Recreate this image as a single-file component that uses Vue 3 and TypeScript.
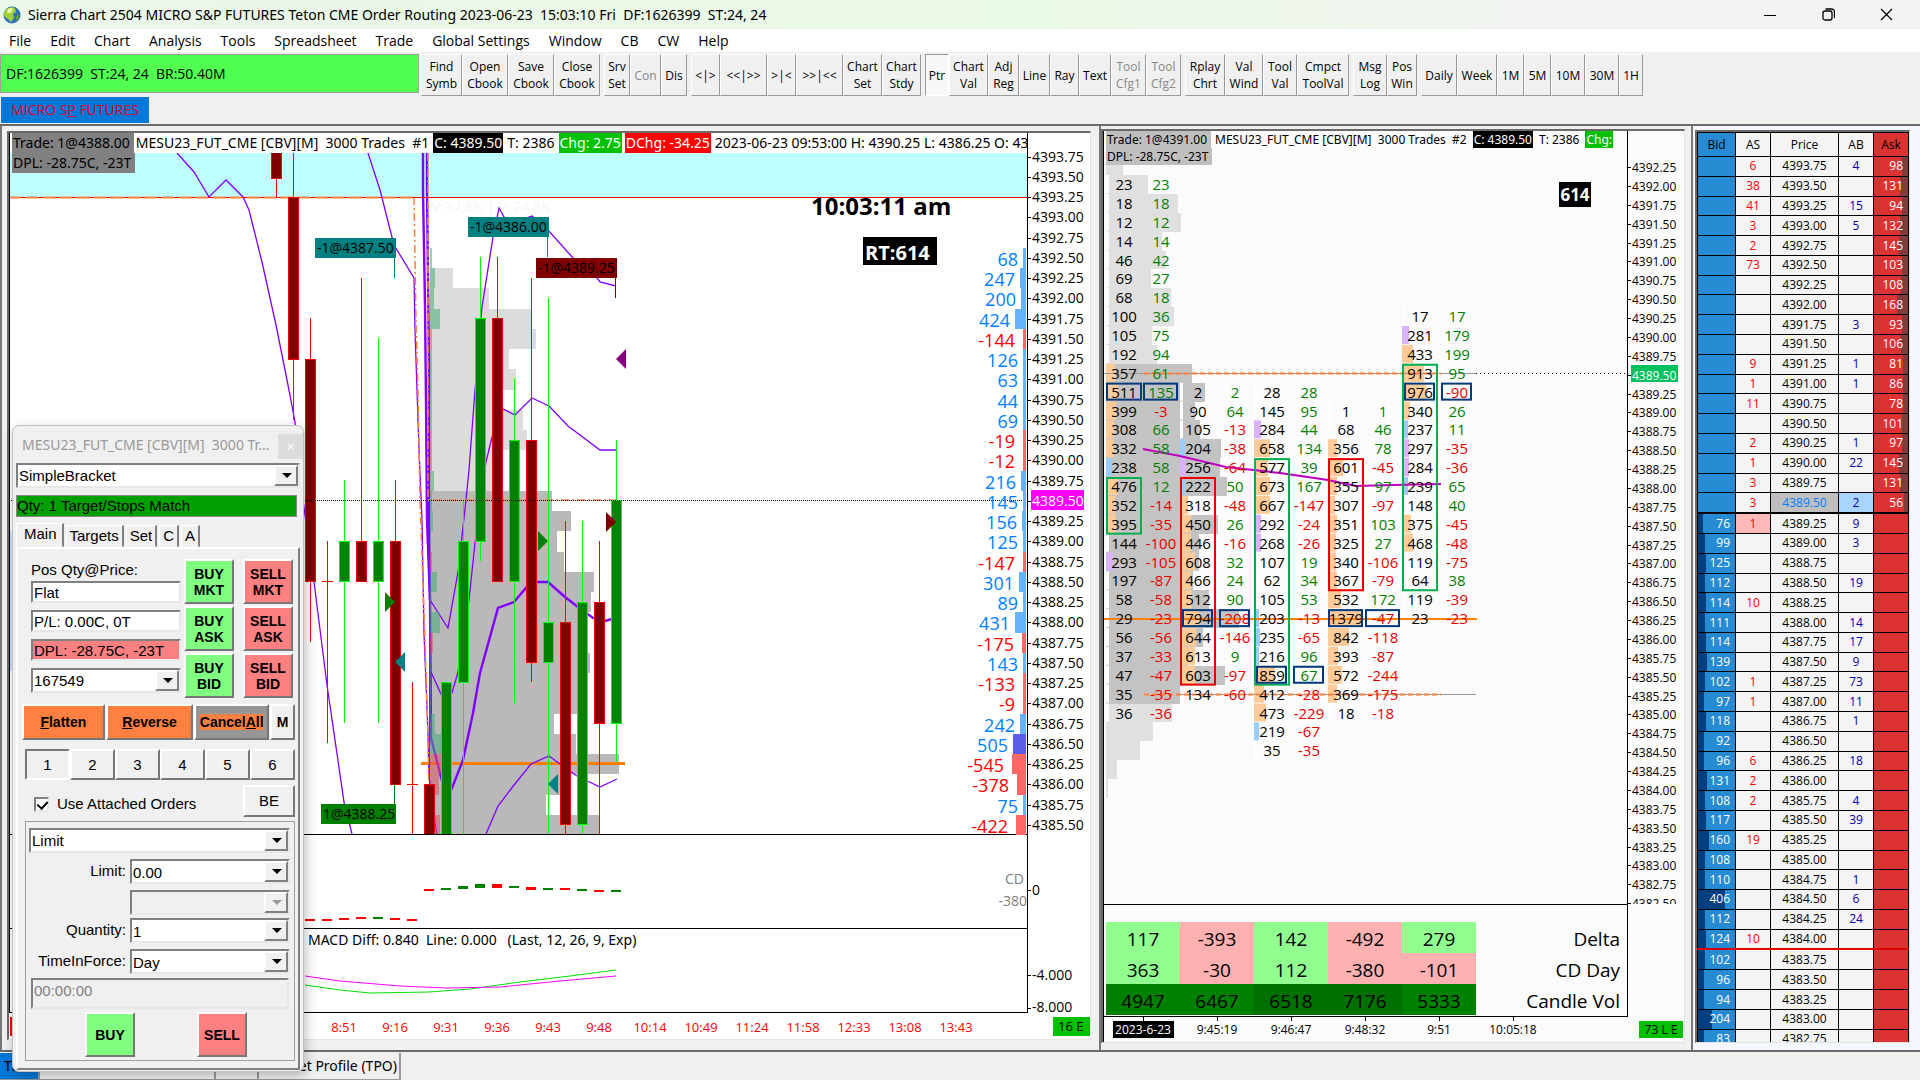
<script setup lang="ts">
interface ToolButton { text: string; w: number; off?: boolean; down?: boolean }
interface Candle { i: number; up: boolean; hi: number; top: number; bot: number; lo: number }
interface Rect { x: number; y: number; w: number; h: number; fill: string }

const menus = ['File', 'Edit', 'Chart', 'Analysis', 'Tools', 'Spreadsheet', 'Trade', 'Global Settings', 'Window', 'CB', 'CW', 'Help']

const toolGroups: ToolButton[][] = [
  [{ text: 'Find\nSymb', w: 41 }, { text: 'Open\nCbook', w: 46 }, { text: 'Save\nCbook', w: 46 }, { text: 'Close\nCbook', w: 46 }],
  [{ text: 'Srv\nSet', w: 26 }, { text: 'Con', w: 31, off: true }, { text: 'Dis', w: 26 }],
  [{ text: '<|>', w: 29 }, { text: '<<|>>', w: 47 }, { text: '>|<', w: 29 }, { text: '>>|<<', w: 47 }, { text: 'Chart\nSet', w: 39 }, { text: 'Chart\nStdy', w: 39 }],
  [{ text: 'Ptr', w: 24, down: true }, { text: 'Chart\nVal', w: 39 }, { text: 'Adj\nReg', w: 31 }, { text: 'Line', w: 31 }, { text: 'Ray', w: 29 }, { text: 'Text', w: 32 }, { text: 'Tool\nCfg1', w: 35, off: true }, { text: 'Tool\nCfg2', w: 35, off: true }],
  [{ text: 'Rplay\nChrt', w: 40 }, { text: 'Val\nWind', w: 38 }, { text: 'Tool\nVal', w: 34 }, { text: 'Cmpct\nToolVal', w: 52 }],
  [{ text: 'Msg\nLog', w: 34 }, { text: 'Pos\nWin', w: 30 }],
  [{ text: 'Daily', w: 36 }, { text: 'Week', w: 40 }, { text: '1M', w: 27 }, { text: '5M', w: 27 }, { text: '10M', w: 34 }, { text: '30M', w: 34 }, { text: '1H', w: 24 }],
]

/* ---- Chart 1: candles with bands and volume profile ---- */
const STEP = 20.25
const yAt = (price: number) => 156.5 + (4393.75 - price) * 4 * STEP
const axis1 = Array.from({ length: 34 }, (_, n) => 4393.75 - n * 0.25)

const candles: Candle[] = [
  { i: -2, up: false, hi: 133, top: 133, bot: 178, lo: 197 },
  { i: -1, up: false, hi: 133, top: 197, bot: 359, lo: 420 },
  { i: 0, up: false, hi: 318, top: 359, bot: 581, lo: 642 },
  { i: 1, up: false, hi: 541, top: 581, bot: 581, lo: 743 },
  { i: 2, up: true, hi: 480, top: 541, bot: 581, lo: 723 },
  { i: 3, up: false, hi: 278, top: 541, bot: 581, lo: 581 },
  { i: 4, up: true, hi: 338, top: 541, bot: 581, lo: 723 },
  { i: 5, up: false, hi: 480, top: 541, bot: 784, lo: 784 },
  { i: 6, up: false, hi: 682, top: 784, bot: 784, lo: 834 },
  { i: 7, up: false, hi: 560, top: 784, bot: 840, lo: 840 },
  { i: 8, up: true, hi: 682, top: 682, bot: 840, lo: 840 },
  { i: 9, up: true, hi: 501, top: 541, bot: 682, lo: 834 },
  { i: 10, up: true, hi: 257, top: 318, bot: 541, lo: 561 },
  { i: 11, up: false, hi: 257, top: 318, bot: 581, lo: 581 },
  { i: 12, up: true, hi: 379, top: 440, bot: 581, lo: 703 },
  { i: 13, up: false, hi: 278, top: 440, bot: 662, lo: 682 },
  { i: 14, up: true, hi: 298, top: 622, bot: 662, lo: 834 },
  { i: 15, up: false, hi: 521, top: 622, bot: 824, lo: 834 },
  { i: 16, up: true, hi: 521, top: 602, bot: 824, lo: 834 },
  { i: 17, up: false, hi: 541, top: 602, bot: 723, lo: 834 },
  { i: 18, up: true, hi: 440, top: 500, bot: 723, lo: 762 },
]
const cx = (i: number) => 310.5 + 17 * i

/* right edge of each profile row, starting at 4392.25 */
const profileEdges = [453, 489, 532, 536, 509, 516, 503, 523, 527, 503, 503, 552, 571, 557, 564, 594, 591, 585, 585, 590, 585, 585, 554, 576, 619, 565, 546, 599]
const profile: Rect[] = profileEdges.map((edge, n) => ({
  x: 430, y: yAt(4392.25) - 10 + n * STEP, w: edge - 430, h: STEP, fill: n < 11 ? '#dcdcdc' : '#b9b9b9',
}))
/* delta beside the profile, starting at 4392.50; the sign gives the colour */
const profileDelta = [2, 5, 4, 10, -2, 2, 2, 2, 2, -2, -2, 4, 2, 3, 1, -2, 7, 1, 10, -3, 1, 1, 1, 5, 11, -11, -9, -1, -10]
const deltaBars: Rect[] = profileDelta.map((d, n) => ({
  x: 430, y: yAt(4392.5) - 10 + n * STEP, w: Math.abs(d), h: STEP, fill: d < 0 ? '#e0506088' : '#44aa7788',
}))

const rowDelta: [number, number][] = [
  [68, 3], [247, 6], [200, 5], [424, 11], [-144, 3], [126, 3], [63, 3], [44, 3], [69, 3], [-19, 3], [-12, 3], [216, 5], [145, 3], [156, 4], [125, 3],
  [-147, 3], [301, 7], [89, 3], [431, 11], [-175, 4], [143, 3], [-133, 3], [-9, 3], [242, 6], [505, 13], [-545, 14], [-378, 9], [75, 3], [-422, 10],
]
const times1 = ['8:51', '9:16', '9:31', '9:36', '9:43', '9:48', '10:14', '10:49', '11:24', '11:58', '12:33', '13:08', '13:43']

const thinBands = [
  '177,153 194,172 209,197 226,180 243,197 249,210 262,262 276,325 288,385 295,422 303,500 314,582 327,685 344,802 352,834',
  '368,153 380,190 394,245 414,278 415,330 417,390 419,450 422,520 424,633 428,733 429,780',
  '430,600 448,628 458,572 466,500 469,470 475,390 482,307 493,237 499,208 504,217 515,222 532,216 548,230 573,258 597,278 600,282 616,286',
  '431,672 441,694 452,693 458,672 469,600 475,543 486,462 492,437 503,409 515,415 532,398 549,406 568,426 600,450 616,450',
  '430,780 435,823 438,840 460,880 486,834 498,806 514,785 531,764 549,756 560,764 577,776 600,787 617,779',
]
const thickBands = [
  '423,133 423,190 425,305 426,403 427,520 430,600',
  '427,133 427,190 429,363 429,520 430,600 431,738 441,777 447,800 452,788 463,760 473,713 480,673 498,608 514,602 531,582 548,582 565,597 578,607 593,618 605,621 612,619',
]
const tags = [
  { x: 315, y: 238, w: 81, t: '-1@4387.50', c: '#008080', s: [258, 278] },
  { x: 468, y: 217, w: 81, t: '-1@4386.00', c: '#008080', s: [237, 257] },
  { x: 536, y: 258, w: 81, t: '-1@4389.25', c: '#800000', s: [278, 298] },
  { x: 321, y: 804, w: 75, t: '1@4388.25', c: '#008000', s: [784, 804] },
]
const arrows = [
  { d: 'M616 359 l10 -10 v20z', c: '#800080' },
  { d: 'M616 522 l-10 -10 v20z', c: '#800000' },
  { d: 'M548 541 l-10 -10 v20z', c: '#008000' },
  { d: 'M395 602 l-10 -10 v20z', c: '#008000' },
  { d: 'M395 662 l10 -10 v20z', c: '#008080' },
  { d: 'M548 784 l10 -10 v20z', c: '#008080' },
]

/* ---- Chart 2: footprint ---- */
const FSTEP = 18.875
const fy = (row: number) => 185 + row * FSTEP
const axis2 = Array.from({ length: 40 }, (_, n) => 4392.25 - n * 0.25)
const columns: { start: number; cells: [number, number][] }[] = [
  { start: 0, cells: [[23, 23], [18, 18], [12, 12], [14, 14], [46, 42], [69, 27], [68, 18], [100, 36], [105, 75], [192, 94], [357, 61], [511, 135], [399, -3], [308, 66], [332, 58], [238, 58], [476, 12], [352, -14], [395, -35], [144, -100], [293, -105], [197, -87], [58, -58], [29, -23], [56, -56], [37, -33], [47, -47], [35, -35], [36, -36]] },
  { start: 11, cells: [[2, 2], [90, 64], [105, -13], [204, -38], [256, -64], [222, 50], [318, -48], [450, 26], [446, -16], [608, 32], [466, 24], [512, 90], [794, -208], [644, -146], [613, 9], [603, -97], [134, -60]] },
  { start: 11, cells: [[28, 28], [145, 95], [284, 44], [658, 134], [577, 39], [673, 167], [667, -147], [292, -24], [268, -26], [107, 19], [62, 34], [105, 53], [203, -13], [235, -65], [216, 96], [859, 67], [412, -28], [473, -229], [219, -67], [35, -35]] },
  { start: 12, cells: [[1, 1], [68, 46], [356, 78], [601, -45], [355, 97], [307, -97], [351, 103], [325, 27], [340, -106], [367, -79], [532, 172], [1379, -47], [842, -118], [393, -87], [572, -244], [369, -175], [18, -18]] },
  { start: 7, cells: [[17, 17], [281, 179], [433, 199], [913, 95], [976, -90], [340, 26], [237, 11], [297, -35], [284, -36], [239, 65], [148, 40], [375, -45], [468, -48], [119, -75], [64, 38], [119, -39], [23, -23]] },
]
const cells = columns.flatMap((col, k) => col.cells.map(([vol, delta], n) => ({
  key: `${k}-${n}`, k, vol, delta, y: fy(col.start + n),
  fill: vol >= 300 ? '#ffcc99' : vol >= 250 ? '#d9b3ff' : vol >= 200 ? '#99ccff' : '#ffffff',
  w: vol < 200 ? 3 : Math.round(vol / 41),
})))
/* right edge of each profile row, starting at 4392.25 */
const fpEdges = [1123, 1148, 1178, 1181, 1162, 1166, 1151, 1171, 1174, 1152, 1157, 1192, 1205, 1195, 1200, 1221, 1220, 1227, 1184, 1218, 1199, 1199, 1193, 1209, 1239, 1203, 1188, 1225, 1180, 1172, 1153, 1140, 1117, 1108]
const fpProfile: Rect[] = fpEdges.map((edge, n) => ({
  x: 1106, y: fy(n - 1) - 10, w: edge - 1106, h: FSTEP, fill: n > 10 && n < 29 ? '#c3c3c3' : '#e0e0e0',
}))
const frames = [
  { k: 0, a: 16, b: 18, c: '#00b050' }, { k: 1, a: 16, b: 26, c: '#e60000' }, { k: 2, a: 15, b: 26, c: '#00b050' },
  { k: 3, a: 15, b: 21, c: '#e60000' }, { k: 4, a: 10, b: 21, c: '#00b050' },
]
const pocs = [
  { x: 1107, w: 34, r: 11 }, { x: 1144, w: 33, r: 11 }, { x: 1183, w: 29, r: 23 }, { x: 1220, w: 29, r: 23 }, { x: 1257, w: 29, r: 26 },
  { x: 1294, w: 29, r: 26 }, { x: 1329, w: 33, r: 23 }, { x: 1366, w: 33, r: 23 }, { x: 1405, w: 29, r: 11 }, { x: 1442, w: 29, r: 11 },
]
const summary = [
  { label: 'Delta', v: [117, -393, 142, -492, 279] },
  { label: 'CD Day', v: [363, -30, 112, -380, -101] },
]
const candleVol = [4947, 6467, 6518, 7176, 5333]
const times2 = ['9:45:19', '9:46:47', '9:48:32', '9:51', '10:05:18']

/* ---- Depth ladder: bid, AS, AB, ask from 4393.75 down ---- */
type Row = [number, number, number, number]
const ladder: Row[] = [
  [0, 6, 4, 98], [0, 38, 0, 131], [0, 41, 15, 94], [0, 3, 5, 132], [0, 2, 0, 145], [0, 73, 0, 103], [0, 0, 0, 108], [0, 0, 0, 168], [0, 0, 3, 93],
  [0, 0, 0, 106], [0, 9, 1, 81], [0, 1, 1, 86], [0, 11, 0, 78], [0, 0, 0, 101], [0, 2, 1, 97], [0, 1, 22, 145], [0, 3, 0, 131], [0, 3, 2, 56],
  [76, 1, 9, 0], [99, 0, 3, 0], [125, 0, 0, 0], [112, 0, 19, 0], [114, 10, 0, 0], [111, 0, 14, 0], [114, 0, 17, 0], [139, 0, 9, 0], [102, 1, 73, 0],
  [97, 1, 11, 0], [118, 0, 1, 0], [92, 0, 0, 0], [96, 6, 18, 0], [131, 2, 0, 0], [108, 2, 4, 0], [117, 0, 39, 0], [160, 19, 0, 0], [108, 0, 0, 0],
  [110, 0, 1, 0], [406, 0, 6, 0], [112, 0, 24, 0], [124, 10, 0, 0], [102, 0, 0, 0], [96, 0, 0, 0], [94, 0, 0, 0], [204, 0, 0, 0], [83, 0, 0, 0],
]
const price = (n: number) => (4393.75 - n * 0.25).toFixed(2)

const cdBars = [
  { x: 429, y: 889, w: 10, h: 2, c: '#f00' }, { x: 446, y: 888, w: 10, h: 2, c: '#008000' }, { x: 463, y: 886, w: 10, h: 3, c: '#008000' },
  { x: 480, y: 884, w: 10, h: 4, c: '#008000' }, { x: 497, y: 884, w: 10, h: 4, c: '#f00' }, { x: 514, y: 886, w: 10, h: 2, c: '#008000' },
  { x: 531, y: 887, w: 10, h: 3, c: '#f00' }, { x: 548, y: 888, w: 10, h: 2, c: '#008000' }, { x: 565, y: 888, w: 10, h: 2, c: '#f00' },
  { x: 582, y: 889, w: 10, h: 2, c: '#008000' }, { x: 599, y: 890, w: 10, h: 2, c: '#f00' }, { x: 616, y: 890, w: 10, h: 2, c: '#008000' },
  { x: 310, y: 919, w: 10, h: 2, c: '#f00' }, { x: 327, y: 919, w: 10, h: 2, c: '#f00' }, { x: 344, y: 918, w: 10, h: 2, c: '#f00' },
  { x: 361, y: 917, w: 10, h: 2, c: '#f00' }, { x: 378, y: 917, w: 10, h: 2, c: '#008000' }, { x: 395, y: 918, w: 10, h: 2, c: '#f00' },
  { x: 412, y: 919, w: 10, h: 2, c: '#f00' },
]
</script>

<template>
  <div class="app">
    <header class="titlebar">
      <svg class="globe" width="18" height="20" viewBox="0 0 18 20">
        <circle cx="9" cy="10" r="8.5" fill="#2f6fb5" />
        <path d="M3 4 Q8 1 12 3 L13 7 L10 9 L11 13 L8 17 L5 14 L1 11 Q0 7 3 4z" fill="#9fcf3f" />
        <path d="M5 4 Q8 2 10 4 L8 8 L4 8z" fill="#e9f7a0" />
        <path d="M13 11 l3 -2 l0 4 l-3 3z" fill="#5aa02c" />
      </svg>
      <span class="caption">Sierra Chart 2504 MICRO S&amp;P FUTURES Teton CME Order Routing 2023-06-23 &nbsp;15:03:10 Fri &nbsp;DF:1626399 &nbsp;ST:24, 24</span>
      <div class="winctl">
        <button type="button" aria-label="Minimize"><svg width="12" height="12"><path d="M0 6.500h12" stroke="#000" /></svg></button>
        <button type="button" aria-label="Restore"><svg width="13" height="13" fill="none" stroke="#000" stroke-width="1.300"><rect x="1" y="3" width="9" height="9" rx="2" /><path d="M3.500 1h6a3 3 0 0 1 3 3v6" /></svg></button>
        <button type="button" aria-label="Close"><svg width="13" height="13"><path d="M1 1l11 11M12 1L1 12" stroke="#000" stroke-width="1.200" /></svg></button>
      </div>
    </header>

    <nav class="menubar"><button v-for="m in menus" :key="m" type="button">{{ m }}</button></nav>

    <div class="toolbar">
      <div class="status">DF:1626399 &nbsp;ST:24, 24 &nbsp;BR:50.40M</div>
      <div v-for="(g, gi) in toolGroups" :key="gi" class="tgroup">
        <button v-for="b in g" :key="b.text" type="button" :class="{ off: b.off, down: b.down }" :style="{ width: b.w + 'px' }">{{ b.text }}</button>
      </div>
    </div>

    <div class="booktabs"><button type="button">MICRO S<u>P</u> FUTURES</button></div>

    <main class="workspace">
      <section class="win win1">
        <div class="pane chart1">
          <div class="plot">
            <svg width="100%" height="904">
              <defs><clipPath id="top1"><rect x="9" y="153" width="1800" height="681" /></clipPath></defs>
              <rect x="1" y="20" width="100%" height="44" fill="#bfffff" />
              <g transform="translate(-9 -133)">
                <rect x="10" y="531" width="6" height="140" fill="#cce4ff" />
                <g clip-path="url(#top1)">
                  <text x="431" y="212" font-size="15" fill="#f6f6f6">V:74.8K | V:74.8K</text>
                  <rect v-for="(r, n) in profile" :key="'p' + n" :x="r.x" :y="r.y" :width="r.w" :height="r.h" :fill="r.fill" shape-rendering="crispEdges" />
                  <path d="M421 763.500H625" stroke="#ff8000" stroke-width="3" />
                  <g fill="none" stroke="#8000ff" stroke-width="1.300">
                    <polyline v-for="p in thinBands" :key="p" :points="p" />
                    <polyline v-for="p in thickBands" :key="p" :points="p" stroke-width="2.400" />
                  </g>
                  <rect v-for="(r, n) in deltaBars" :key="'d' + n" :x="r.x" :y="r.y" :width="r.w" :height="r.h" :fill="r.fill" shape-rendering="crispEdges" />
                </g>
                <path d="M414 197 L416 320 L418 390 L420 500 L425 640 L428 740 L429 784 M428 153 V500 H616" stroke="#ff8040" stroke-width="1.500" stroke-dasharray="8 3 2 3" fill="none" />
              </g>
              <path d="M0 64.500H100000" stroke="#f00" />
              <path d="M0 64.500H405" stroke="#ff8040" stroke-width="2" stroke-dasharray="12 5" />
              <g transform="translate(-9 -133)">
                <g clip-path="url(#top1)" shape-rendering="crispEdges">
                  <g v-for="c in candles" :key="c.i" :stroke="c.up ? '#0f0' : '#f00'">
                    <path :d="`M${cx(c.i)} ${c.hi}V${c.lo}`" />
                    <path v-if="c.top === c.bot" :d="`M${cx(c.i) - 5.5} ${c.top + 0.5}h11`" />
                    <rect v-else :x="cx(c.i) - 5" :y="c.top + 0.5" width="10" :height="c.bot - c.top" :fill="c.up ? '#008000' : '#800000'" />
                  </g>
                </g>
                <path v-for="a in arrows" :key="a.d" :d="a.d" :fill="a.c" />
                <g v-for="t in tags" :key="t.t">
                  <rect :x="t.x" :y="t.y" :width="t.w" height="20" :fill="t.c" />
                  <path :d="`M${t.x + t.w - 1.5} ${t.s[0]}V${t.s[1]}`" :stroke="t.c" />
                  <text :x="t.x + 2" :y="t.y + 15" font-size="14">{{ t.t }}</text>
                </g>
              </g>
              <path d="M0 367.500H100000" stroke="#000" stroke-dasharray="1 1" />
              <path d="M0 701.500H100000M0 795.500H100000M0 879.500H100000M0.500 0V880" stroke="#000" />
              <svg x="100%" overflow="visible">
                <g transform="translate(-1027 -133)">
                  <text x="811" y="215" font-size="24" font-weight="700">10:03:11 am</text>
                  <rect x="863" y="237" width="74" height="28" />
                  <text x="865" y="260" font-size="20" font-weight="700" fill="#fff">RT:614</text>
                  <g v-for="([v, w], n) in rowDelta" :key="n" :fill="v < 0 ? '#f00' : '#0080ff'">
                    <rect :x="1026 - w" :y="yAt(4392.5) - 10 + n * STEP" :width="w" :height="STEP" :fill="v < 0 ? '#ff6666' : v > 500 ? '#5c5ce6' : '#66b2ff'" shape-rendering="crispEdges" />
                    <text :x="1026 - w - (v < 0 ? 8 : 5)" :y="yAt(4392.5) + n * STEP + 8" font-size="18" text-anchor="end">{{ v }}</text>
                  </g>
                  <g fill="#808080" font-size="14" text-anchor="end"><text x="1024" y="884">CD</text><text x="1027" y="906">-380</text></g>
                </g>
              </svg>
              <g transform="translate(-9 -133)">
                <rect v-for="(b, n) in cdBars" :key="n" :x="b.x - 5" :y="b.y" :width="b.w" :height="b.h" :fill="b.c" />
                <text x="308" y="945" font-size="14" class="wide">MACD Diff: 0.840 &#160;Line: 0.000 &#160; (Last, 12, 26, 9, Exp)</text>
                <polyline points="305,985 340,990 370,993 429,992 470,989 520,982 570,976 616,970" fill="none" stroke="#00e000" />
                <polyline points="305,976 340,981 400,986 446,988 500,987 560,981 616,976" fill="none" stroke="#f0f" />
                <g fill="#f00" font-size="13" text-anchor="middle">
                  <rect x="10" y="1017" width="8" height="19" />
                  <text v-for="(t, n) in times1" :key="t" :x="344 + 51 * n" y="1032">{{ t }}</text>
                </g>
              </g>
            </svg>
            <div class="legend">
              <span class="trade">Trade: 1@4388.00</span><span>MESU23_FUT_CME [CBV][M] &nbsp;3000 Trades &nbsp;#1</span>
              <span class="blk">C: 4389.50</span><span>T: 2386</span><span class="grn">Chg: 2.75</span><span class="red">DChg: -34.25</span><span>2023-06-23 09:53:00 H: 4390.25 L: 4386.25 O: 43</span>
            </div>
            <div class="legend second"><span class="trade">DPL: -28.75C, -23T</span></div>
          </div>
          <svg class="axis" width="64" height="904">
            <path d="M0.500 0V880" stroke="#000" />
            <g transform="translate(-1027 -133)" font-size="14">
              <rect x="1031" y="490" width="53" height="20" fill="#f0f" />
              <g v-for="p in axis1" :key="p">
                <path :d="`M1028 ${Math.round(yAt(p)) + 0.5}h3`" stroke="#000" />
                <text x="1032" :y="yAt(p) + 5" :fill="p === 4389.5 ? '#fff' : '#000'">{{ p.toFixed(2) }}</text>
              </g>
              <path d="M1028 890.500h3M1028 975.500h3M1028 1008.500h3" stroke="#000" />
              <text x="1032" y="895">0</text>
              <text x="1032" y="980">-4.000</text>
              <text x="1032" y="1012">-8.000</text>
              <rect x="1028" y="1013" width="60" height="24" fill="#fff" />
              <rect x="1053" y="1017" width="37" height="19" fill="#00c000" />
              <text x="1058" y="1031" font-size="13">16 E</text>
            </g>
          </svg>
        </div>
      </section>

      <section class="win win2">
        <div class="pane chart2">
          <div class="plot">
            <svg width="100%" height="773">
              <g transform="translate(-1104 -131)">
                <rect v-for="(r, n) in fpProfile" :key="'p' + n" :x="r.x" :y="r.y" :width="r.w" :height="r.h" :fill="r.fill" shape-rendering="crispEdges" />
                <rect v-for="c in cells" :key="'b' + c.key" :x="1106 + 74 * c.k" :y="c.y - 10" :width="c.w" height="18" :fill="c.fill" />
                <path d="M1104 373.500H1476M1180 694.500H1476" stroke="#999" />
                <path d="M1476 373.500H1627" stroke="#000" stroke-dasharray="1 3" />
                <path d="M1144 373.500H1441M1144 694.500H1441" stroke="#ff8040" stroke-width="2" stroke-dasharray="5 3" />
                <path d="M1103 619H1477" stroke="#ff8000" stroke-width="2" />
                <path d="M1143 449 L1180 456 L1226 467 L1280 473 L1328 480 L1356 486 L1393 485 L1441 484" stroke="#c000c0" stroke-width="2" fill="none" />
                <g v-for="c in cells" :key="c.key" font-size="15" text-anchor="middle">
                  <text :x="1124 + 74 * c.k" :y="c.y + 5">{{ c.vol }}</text>
                  <text :x="1161 + 74 * c.k" :y="c.y + 5" :fill="c.delta < 0 ? '#e60000' : '#008000'">{{ c.delta }}</text>
                </g>
                <g fill="none" stroke-width="2">
                  <rect v-for="f in frames" :key="f.k" :x="1107 + 74 * f.k" :y="fy(f.a) - 9" width="34" :height="(f.b - f.a + 1) * FSTEP - 1" :stroke="f.c" />
                  <rect v-for="p in pocs" :key="p.x" :x="p.x" :y="fy(p.r) - 9" :width="p.w" height="16" stroke="#003a7d" />
                </g>
                <rect x="1559" y="182" width="32" height="25" />
                <text x="1575" y="201" font-size="17" font-weight="700" fill="#fff" text-anchor="middle">614</text>
              </g>
            </svg>
            <div class="legend small">
              <span class="trade">Trade: 1@4391.00</span><span>MESU23_FUT_CME [CBV][M] &nbsp;3000 Trades &nbsp;#2</span>
              <span class="blk">C: 4389.50</span><span>T: 2386</span><span class="grn">Chg:</span>
            </div>
            <div class="legend small second"><span class="trade">DPL: -28.75C, -23T</span></div>
            <div class="summary">
              <table>
                <tbody>
                  <tr v-for="s in summary" :key="s.label">
                    <td v-for="(v, n) in s.v" :key="n" :class="v < 0 ? 'neg' : 'pos'">{{ v }}</td>
                    <th scope="row">{{ s.label }}</th>
                  </tr>
                  <tr>
                    <td v-for="v in candleVol" :key="v" :class="['vol', { hot: v > 6500 }]">{{ v }}</td>
                    <th scope="row">Candle Vol</th>
                  </tr>
                </tbody>
              </table>
            </div>
            <svg width="100%" height="23">
              <g transform="translate(-1104 -1017)" font-size="12" text-anchor="middle">
                <path v-for="n in 6" :key="n" :d="`M${1069.5 + 74 * n} 1017v4`" stroke="#000" />
                <rect x="1113" y="1021" width="61" height="17" />
                <text x="1143" y="1034" fill="#fff">2023-6-23</text>
                <text v-for="(t, n) in times2" :key="t" :x="1217 + 74 * n" y="1034">{{ t }}</text>
              </g>
            </svg>
          </div>
          <div class="side">
            <div class="scale">
              <svg width="56" height="773">
                <g transform="translate(-1628 -131)" font-size="12">
                  <rect x="1631" y="365" width="47" height="17" fill="#00c060" />
                  <g v-for="(p, n) in axis2" :key="p">
                    <path :d="`M1628 ${Math.round(167 + n * FSTEP) + 0.5}h3`" stroke="#000" />
                    <text x="1632" :y="172 + n * FSTEP" :fill="p === 4389.5 ? '#fff' : '#000'">{{ p.toFixed(2) }}</text>
                  </g>
                </g>
              </svg>
            </div>
            <span class="flag">73 L E</span>
          </div>
        </div>
      </section>

      <section class="win win3">
        <div class="pane dom">
          <table>
            <thead><tr><th class="bid">Bid</th><th>AS</th><th>Price</th><th>AB</th><th class="ask">Ask</th></tr></thead>
            <tbody>
              <tr v-for="(r, n) in ladder" :key="n" :class="{ last: n === 17, low: n === 39 }">
                <td class="bid"><i v-if="r[0]" :style="{ width: Math.round(r[0] / 15) + 'px' }"></i><b>{{ r[0] || '' }}</b></td>
                <td :class="['as', { hit: n === 18 }]">{{ r[1] || '' }}</td>
                <td :class="{ cur: n === 17 }">{{ price(n) }}</td>
                <td :class="['ab', { hit: n === 17 }]">{{ r[2] || '' }}</td>
                <td class="ask"><i v-if="r[3]" :style="{ width: Math.round(r[3] / 16) + 'px' }"></i><b>{{ r[3] || '' }}</b></td>
              </tr>
            </tbody>
          </table>
        </div>
      </section>

      <form class="ticket" @submit.prevent>
        <div class="thead"><span>MESU23_FUT_CME [CBV][M] &nbsp;3000 Tr...</span><button type="button" aria-label="Close window">×</button></div>
        <label class="combo"><select aria-label="Bracket"><option>SimpleBracket</option></select></label>
        <div class="match">Qty: 1 Target/Stops Match</div>
        <div class="ttabs"><button type="button" class="on">Main</button><button type="button">Targets</button><button type="button">Set</button><button type="button">C</button><button type="button">A</button></div>
        <div class="page">
          <div class="entry">
            <div class="left">
              <label for="pos">Pos Qty@Price:</label>
              <input id="pos" value="Flat" />
              <input aria-label="Profit" value="P/L: 0.00C, 0T" />
              <input aria-label="Daily profit" class="loss" value="DPL: -28.75C, -23T" />
              <label class="combo acct"><select aria-label="Account"><option>167549</option></select></label>
            </div>
            <div class="quick">
              <button type="button" class="buy">BUY<br />MKT</button><button type="button" class="sell">SELL<br />MKT</button>
              <button type="button" class="buy">BUY<br />ASK</button><button type="button" class="sell">SELL<br />ASK</button>
              <button type="button" class="buy">BUY<br />BID</button><button type="button" class="sell">SELL<br />BID</button>
            </div>
          </div>
          <div class="acts">
            <button type="button" class="or w83"><u>F</u>latten</button><button type="button" class="or w88"><u>R</u>everse</button>
            <button type="button" class="cancel"><span>Cancel<u>A</u>ll</span></button><button type="button" class="m">M</button>
          </div>
          <div class="nums"><button v-for="n in 6" :key="n" type="button" :class="{ down: n === 1 }">{{ n }}</button></div>
          <div class="attach"><label><input type="checkbox" checked />Use Attached Orders</label><button type="button">BE</button></div>
          <div class="order">
            <label class="combo"><select aria-label="Order type"><option>Limit</option></select></label>
            <div class="f"><label for="lim">Limit:</label><span class="combo"><select id="lim"><option>0.00</option></select></span></div>
            <div class="f"><span></span><span class="combo dis"><select disabled aria-label="Second price"><option></option></select></span></div>
            <div class="f q"><label for="qty">Quantity:</label><span class="combo"><select id="qty"><option>1</option></select></span></div>
            <div class="f"><label for="tif">TimeInForce:</label><span class="combo"><select id="tif"><option>Day</option></select></span></div>
            <input class="gtd" aria-label="Time" value="00:00:00" disabled />
            <div class="send"><button type="button" class="buy">BUY</button><button type="button" class="sell">SELL</button></div>
          </div>
        </div>
      </form>
    </main>

    <footer class="sheettabs">
      <button type="button" class="on t1">Time</button><button type="button" class="t2"></button><button type="button" class="t3"></button><button type="button" class="t4">Market Profile (TPO)</button>
    </footer>
  </div>
</template>

<style>
body { background: #f0f0f0; }
</style>

<style scoped>
* { box-sizing: border-box; }
.app { display: flex; flex-direction: column; min-height: 100vh; background: #f0f0f0; color: #000; font: 14px/20px "Open Sans", "Noto Sans", sans-serif; }
button, input, select { font: inherit; color: inherit; border-radius: 0; margin: 0; }
button { padding: 0; border: 0; background: none; white-space: nowrap; }
svg { display: block; }
.wide { font-family: "Noto Sans", sans-serif; }
.titlebar { display: flex; align-items: center; height: 29px; padding: 0 5px 0 3px; background: linear-gradient(90deg, #eaf7e9 0%, #eaf8e6 55%, #f3f3f3 85%); }
.caption { margin-left: 7px; flex: 1; white-space: nowrap; font-family: "Noto Sans", sans-serif; }
.winctl { display: flex; }
.winctl button { width: 58px; height: 29px; display: grid; place-items: center; }
.menubar { display: flex; gap: 19px; height: 23px; padding-left: 9px; background: #fff; line-height: 22px; }
.menubar button { height: 23px; }
.toolbar { display: flex; gap: 4px; height: 44px; padding-top: 2px; font-size: 12px; line-height: 17px; }
.status { width: 419px; height: 39px; padding-left: 5px; border: 1px solid #a0a0a0; background: #50ff50; line-height: 38px; font-size: 14px; margin-right: -2px; }
.tgroup { display: flex; }
.tgroup button { height: 42px; white-space: pre; border: 1px solid #999; border-top-color: #fff; border-left-color: #fff; }
.tgroup button.off { color: #888; }
.tgroup button.down { border-color: #999 #fff #fff #999; background: #f8f8f8; }
.booktabs { height: 28px; padding: 1px 0 0 1px; }
.booktabs button { width: 148px; height: 26px; background: #0078d7; color: #e00030; }
.workspace { position: relative; flex: 1; display: grid; grid-template-columns: 1101fr 592fr 227fr; border: solid #6a6a6a; border-width: 2px 0; }
.win { display: grid; min-width: 0; border-right: 2px solid #777; }
.win1 { padding: 5px 8px 10px 5px; border-left: 2px solid #777; }
.win2 { padding: 3px 6px 7px 0; }
.win3 { padding: 4px 10px 7px 2px; background: #f4f7fd; border-right: 0; }
.pane { min-width: 0; border: solid; border-width: 2px 1px 1px 2px; border-color: #6a6a6a #e3e3e3 #e3e3e3 #6a6a6a; overflow: hidden; display: grid; }
.chart1 { grid-template-columns: minmax(0, 1fr) 63px; background: #fff; }
.chart2 { grid-template-columns: minmax(0, 1fr) 57px; background: #fbfbfb; }
.plot { position: relative; min-width: 0; overflow: hidden; }
.legend { position: absolute; left: 3px; top: 0; display: flex; gap: 3px; line-height: 20px; white-space: pre; font-family: "Noto Sans", sans-serif; }
.legend.second { top: 20px; }
.legend span { padding: 0 1px; }
.legend .trade { background: #808080; padding-right: 4px; margin-right: -2px; }
.legend.small { font-size: 12px; line-height: 17px; gap: 5px; left: 2px; }
.legend.small.second { top: 17px; }
.legend.small .trade { background: #bfbfbf; }
.legend .blk { background: #000; color: #fff; }
.legend .grn { background: #00c000; color: #fff; }
.legend .red { background: #f00; color: #fff; }
.chart2 .plot { border-left: 1px solid #000; }
.summary { height: 113px; border: solid #000; border-width: 1px 0; padding: 17px 0 1px 2px; }
.summary table { width: 100%; border-collapse: collapse; table-layout: fixed; font-size: 19px; line-height: 27px; }
.summary td { width: 74px; padding: 4px 0 0; text-align: center; height: 31px; }
.summary th { padding: 4px 7px 0 0; text-align: right; font-weight: 400; }
.pos { background: #90ff90; }
.neg { background: #ffb0b0; }
.vol { background: #008000; }
.vol.hot { background: #007000; }
.side { display: flex; flex-direction: column; }
.scale { height: 886px; border-left: 1px solid #000; }
.flag { align-self: flex-end; width: 44px; height: 17px; margin: 4px 1px 0 0; background: #00c000; font-size: 12px; line-height: 17px; text-align: center; }
.dom { contain: size; background: #f4f4f4; align-items: start; }
.dom table { width: 100%; height: 918px; table-layout: fixed; border-collapse: collapse; font-size: 12px; line-height: 16px; text-align: center; }
.dom th, .dom td { padding: 0; border: 1px solid #000; font-weight: 400; position: relative; }
.dom th { height: 24px; width: 35px; }
.dom th:nth-child(1) { width: 38px; }
.dom th:nth-child(3) { width: 68px; }
.dom .bid { background: #268bd2; }
.dom .ask { background: #dc3232; }
.dom b { position: relative; display: block; padding-right: 5px; text-align: right; font-weight: 400; color: #fff; }
.dom i { position: absolute; top: 0; bottom: 0; }
.dom .bid i { left: 0; background: #003f80; }
.dom .ask i { right: 0; background: #803c3c; }
.dom .as { color: #f00; }
.dom .ab { color: #0000b0; }
.dom .as.hit { background: #ffb9b9; }
.dom .ab.hit { background: #a9d4ff; }
.dom .cur { background: #bfbfbf; color: #0080ff; }
.dom .last td { border-bottom: 2px solid #000; }
.dom .low td { border-bottom: 2px solid #d00; }

.ticket { position: absolute; left: 12px; top: 299px; width: 292px; padding: 0 3px 1px; border: 1px solid #c0c0c0; border-radius: 7px; background: #f0f0f0; box-shadow: 2px 4px 12px rgba(0, 0, 0, .25); font: 15px/18px "Liberation Sans", Arial, sans-serif; }
.thead { display: flex; justify-content: space-between; align-items: center; height: 37px; padding-left: 6px; margin-right: -3px; color: #999; font: 14px/20px "Noto Sans", sans-serif; white-space: pre; }
.thead span { overflow: hidden; }
.thead button { width: 25px; height: 25px; background: #dcdcdc; color: #fff; flex: none; margin-top: 4px; }
.combo { display: block; position: relative; height: 25px; border: 2px solid; border-color: #808080 #e8e8e8 #e8e8e8 #808080; background: #fff; }
.combo select { display: block; width: 100%; height: 21px; padding: 0 0 0 1px; border: 0; appearance: none; background: none; outline: 0; opacity: 1; }
.combo::before { content: ""; position: absolute; right: 0; top: 0; bottom: 0; width: 20px; border: 2px solid; border-color: #fff #808080 #808080 #fff; background: #f0f0f0; pointer-events: none; }
.combo::after { content: ""; position: absolute; right: 6px; top: 8px; border: 5px solid transparent; border-top-color: #000; border-bottom: 0; pointer-events: none; }
.combo.dis { background: #f0f0f0; }
.combo.dis::after { border-top-color: #999; }
.match { height: 22px; margin: 7px 3px 0 0; border: 1px solid #888; background: #00a000; line-height: 20px; }
.ttabs { display: flex; align-items: flex-end; gap: 2px; height: 30px; }
.ttabs button { height: 22px; padding: 0 3px; border: 1px solid; border-color: #fff #808080 transparent #fff; border-right-width: 2px; }
.ttabs .on { height: 24px; padding: 0 5px 2px 7px; }
.page { padding: 11px 5px 7px 8px; border: 2px solid; border-color: #fff #808080 #808080 #fff; }
.entry { display: flex; gap: 3px; padding-left: 5px; }
.left { width: 150px; display: flex; flex-direction: column; gap: 7px; line-height: 16px; }
.left > label:first-child { margin: 2px 0 -4px; height: 16px; }
.left input { height: 22px; padding: 0 1px; border: 2px solid; border-color: #808080 #e8e8e8 #e8e8e8 #808080; background: #fff; width: 100%; }
.left input.loss { background: #ff8080; }
.quick { display: grid; grid-template-columns: 50px 50px; gap: 2px 9px; flex: none; align-content: start; margin-top: -1px; }
.quick button, .send button { height: 45px; font-weight: 700; font-size: 14px; line-height: 16px; }
.ticket .buy, .ticket .sell, .acts button, .nums button, .attach button { border: 2px solid; border-color: #fff #777 #777 #fff; }
.ticket .buy { background: #80ff80; }
.ticket .sell { background: #ff8080; }
.acts { display: flex; gap: 1px; height: 36px; margin: 6px -2px 0 -4px; font-weight: 700; font-size: 14px; }
.acts .or { background: #ff8040; }
.acts .w83 { width: 83px; }
.acts .w88 { width: 88px; }
.acts .cancel { width: 75px; background: #969696; }
.acts .cancel span { background: #ff8040; }
.acts .m { width: 25px; }
.nums { display: flex; height: 31px; margin: 9px 0 0 -1px; width: 270px; }
.nums button { flex: 1; }
.nums button.down { border-color: #777 #fff #fff #777; }
.attach { display: flex; justify-content: space-between; align-items: center; margin: 5px -2px 0 8px; }
.attach label { display: flex; align-items: center; gap: 8px; padding-top: 6px; }
.attach input { appearance: none; width: 15px; height: 15px; border: 2px solid; border-color: #808080 #e8e8e8 #e8e8e8 #808080; background: #fff; position: relative; }
.attach input:checked::after { content: ""; position: absolute; left: 3px; top: 0; width: 5px; height: 8px; border: solid #000; border-width: 0 2px 2px 0; transform: rotate(42deg); }
.attach button { width: 52px; height: 32px; }
.order { width: 270px; margin: 4px 0 0 -1px; padding: 6px 4px 3px 3px; border: 1px solid #a0a0a0; }
.f { display: grid; grid-template-columns: 97px 1fr; column-gap: 4px; text-align: right; margin-top: 6px; line-height: 24px; }
.f.q { margin-top: 3px; }
.gtd { display: block; width: 258px; height: 31px; margin: 4px 0 3px 2px; padding: 0 1px 6px; border: 2px solid; border-color: #808080 #e8e8e8 #e8e8e8 #808080; background: #f0f0f0; color: #808080; }
.send { display: flex; justify-content: space-between; padding: 0 43px 0 56px; }
.send button { width: 50px; }

.sheettabs { display: flex; height: 28px; padding-top: 1px; font-family: "Noto Sans", sans-serif; }
.sheettabs button { height: 27px; border-right: 2px solid #999; border-bottom: 1px solid #999; text-align: left; padding: 0 4px; overflow: hidden; }
.sheettabs .on { background: #0078d7; }
.sheettabs .t1 { width: 40px; }
.sheettabs .t2 { width: 176px; }
.sheettabs .t3 { width: 43px; }
.sheettabs .t4 { width: 142px; text-align: right; padding: 0 2px; }
</style>
